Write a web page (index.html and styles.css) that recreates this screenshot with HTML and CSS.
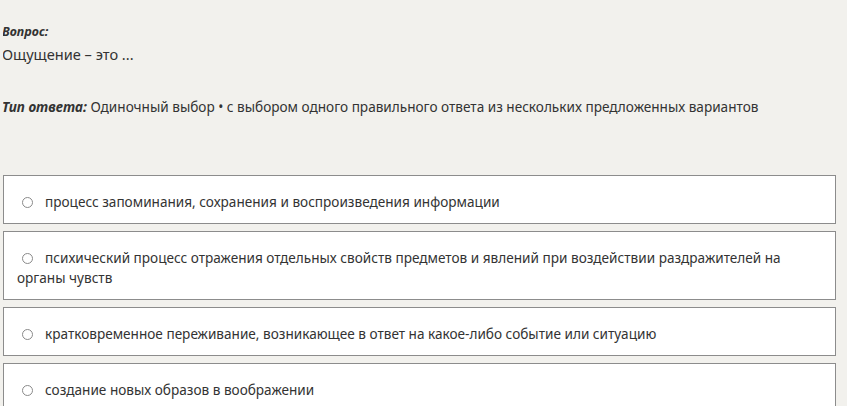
FILE: index.html
```html
<!DOCTYPE html>
<html lang="ru">

<head>
  <meta charset="UTF-8">
  <meta name="viewport" content="width=device-width, initial-scale=1.0">
  <title>Вопрос</title>
  <link rel="stylesheet" href="styles.css">
</head>

<body>
  <div class="question">
    <div class="label">Вопрос:</div>
    <div class="question-text">Ощущение – это ...</div>
    <div class="answer-type"><b><i>Тип ответа:</i></b> Одиночный выбор • с выбором одного правильного ответа из нескольких предложенных вариантов</div>
  </div>

  <div class="answers">
    <div class="answer"><span class="radio"></span>процесс запоминания, сохранения и воспроизведения информации</div>
    <div class="answer"><span class="radio"></span>психический процесс отражения отдельных свойств предметов и явлений при воздействии раздражителей на органы чувств</div>
    <div class="answer"><span class="radio"></span>кратковременное переживание, возникающее в ответ на какое-либо событие или ситуацию</div>
    <div class="answer"><span class="radio"></span>создание новых образов в воображении</div>
  </div>
</body>

</html>
```

FILE: styles.css
```css
body {
  margin: 0 11px 0 3px;
  background-color: #f2f1ed;
  color: #333;
  font-family: "Noto Sans", "Open Sans", sans-serif;
  font-size: 13.6px;
}

.question {
  margin-left: -1px;
  padding-top: 22px;
}

.label {
  font-size: 12.5px;
  font-weight: bold;
  font-style: italic;
  line-height: 20px;
}

.question-text {
  font-size: 14.6px;
  line-height: 24px;
}

.answer-type {
  margin-top: 31px;
  line-height: 20px;
}

.answers {
  margin-top: 58px;
}

.answer {
  background-color: #fff;
  border: 1px solid #8c8c8c;
  padding: 16px 13px 11px;
  margin-bottom: 7px;
  line-height: 20px;
}

.radio {
  display: inline-block;
  width: 9px;
  height: 9px;
  border: 1px solid #8a8a8a;
  border-radius: 50%;
  margin: 0 12px 0 5px;
  vertical-align: -1px;
}
```
